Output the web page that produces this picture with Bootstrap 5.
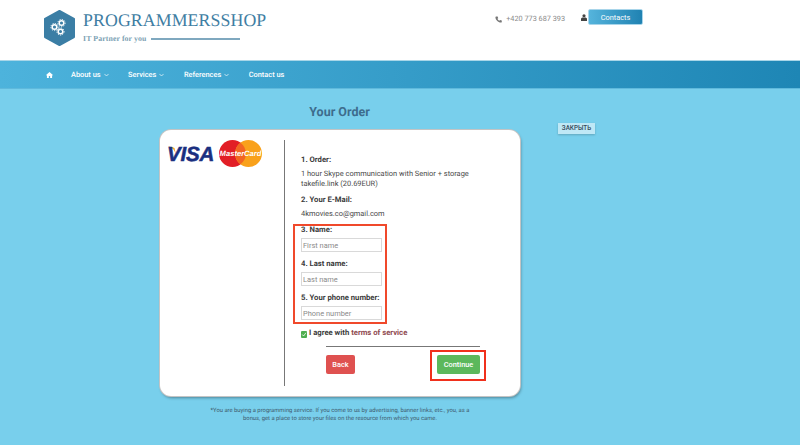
<!DOCTYPE html>
<html lang="en">
<head>
<meta charset="utf-8">
<title>Your Order</title>
<link href="https://cdn.jsdelivr.net/npm/bootstrap@5.3.0/dist/css/bootstrap.min.css" rel="stylesheet">
<style>
html,body{height:445px;overflow:hidden}
body{background:#78cfec;font-family:Roboto,"Liberation Sans",sans-serif;font-size:7.45px;color:#444;text-rendering:geometricPrecision}
.top-head{height:60px;background:#fff;padding:0 157px 0 42px}
.logo-name{font-family:"Liberation Serif",serif;font-size:17.8px;line-height:20px;color:#3f7ea3;letter-spacing:.1px}
.logo-text{margin-left:6px;padding-top:10px}
.logo-tag{font-family:"Liberation Serif",serif;font-size:7.8px;font-weight:700;color:#7c9fb3;line-height:9px;margin-top:4px;letter-spacing:.1px}
.logo-line{height:2px;width:89px;background:#7fa8bf;margin-left:4px}
.phone-box{color:#8a8a8a;font-size:7.3px;margin-top:14px;margin-right:16px}
.contact-btn{width:55px;height:16px;padding:0;border:1px solid #a8d5ea;border-radius:2px;background:linear-gradient(90deg,#55b4dc,#2082b2);color:#fff;font-size:7.4px;line-height:13px;margin-top:9px;margin-left:1px}
.top-nav{height:29px;background:linear-gradient(90deg,#4db3dc,#1e86b5);border-top:1px solid #a9d6e8;border-bottom:1px solid #5fb9dc;padding:1px 0 0 46px}
.nav-entry{color:#fff;font-size:7.4px;font-weight:500;text-decoration:none;margin-right:19.500px;display:flex;align-items:center;gap:3px}
.nav-entry svg{display:block}
.page-main{position:relative;padding-top:17px}
.order-title{font-size:12.500px;font-weight:700;color:#3d6c8c;text-align:center;width:679px;margin:0;line-height:14px}
.close-tag{position:absolute;left:558px;top:34px;width:37px;height:11px;background:#bfe8f6;color:#33495a;font-size:6.300px;font-weight:500;line-height:11px;text-align:center;box-shadow:0 1px 2px rgba(0,0,0,.2);padding:0;border:0;border-radius:0}
.order-card{width:360px;height:266px;margin:10px 0 0 160px;background:#fff;border-radius:11px;box-shadow:0 0 0 1px #c4c4c4,1px 2px 3px rgba(0,0,0,.35);padding:10px 0 10px 6px}
.pay-col{width:119px;border-right:1px solid #777;margin-right:16px;gap:5px;height:246px}
.form-col{padding-top:15px;width:190px}
.step-label{font-weight:700;font-size:7.700px;color:#3b3b3b;line-height:10px;margin:0 0 4px;white-space:nowrap}
.step-value{line-height:10px;margin:0 0 6px;color:#4a4a4a;white-space:nowrap}
.marked-box{border:2px solid #f0492b;margin-left:-8px;width:94px;padding:0 0 1px 6px;height:100px;margin-top:-1px;margin-bottom:4px}
.marked-box .step-label{margin:-1px 0 3px}
.field-input{display:block;width:81px;height:14px;border:1px solid #d9d9d9;border-radius:0;font-size:7.450px;padding:0 1px;color:#444;margin-bottom:8px;background:#fff;font-family:inherit}
.field-input::placeholder{color:#8a8a8a}
.agree-row{font-weight:700;color:#3b3b3b;line-height:10px;gap:2px;font-size:7.700px}
.agree-row a{color:#8f4a50;text-decoration:none}
.tick-box{width:6px;height:7px;background:#4fae4f;border:0;border-radius:1px;margin-top:3px;display:block}
.rule-line{height:1px;background:#777;width:154px;margin:8px 0 0 25px}
.action-row{margin:8px 0 0 25px;width:154px}
.back-btn,.go-btn{height:19px;padding:0;font-size:7.400px;font-weight:500;line-height:19px;border:0;border-radius:2px;color:#fff}
.back-btn{width:29px;background:#df5150}
.go-btn{width:43px;background:#5cb85c}
.go-mark{border:2px solid #f0301c;padding:3px 4px 5px 5px;margin:-5px -6px 0 0}
.fine-print{width:264px;margin:11px 0 0 208px;text-align:center;font-size:5.850px;line-height:8px;color:#3e5a6c}
</style>
</head>
<body>
<header class="top-head d-flex justify-content-between">
  <div class="d-flex">
    <svg width="35" height="38" viewBox="0 0 35 38" style="margin-top:9px">
      <polygon points="17.5,2 32,10 32,28 17.5,36 3,28 3,10" fill="#3b7ea5" stroke="#3b7ea5" stroke-linejoin="round" stroke-width="2"/>
      <g fill="none" stroke="#fff">
        <circle cx="12.5" cy="18" r="2.3" stroke-width="1.5"/><circle cx="12.5" cy="18" r="3.6" stroke-width="1" stroke-dasharray="1.2 1.2"/>
        <circle cx="19.5" cy="14" r="2.3" stroke-width="1.5"/><circle cx="19.5" cy="14" r="3.6" stroke-width="1" stroke-dasharray="1.2 1.2"/>
        <circle cx="18.5" cy="22.5" r="2.3" stroke-width="1.5"/><circle cx="18.5" cy="22.5" r="3.6" stroke-width="1" stroke-dasharray="1.2 1.2"/>
      </g>
    </svg>
    <div class="logo-text">
      <div class="logo-name">PROGRAMMERSSHOP</div>
      <div class="d-flex align-items-center logo-tag"><span>IT Partner for you</span><span class="logo-line"></span></div>
    </div>
  </div>
  <div class="d-flex align-items-start">
    <div class="phone-box d-flex align-items-center gap-1">
      <svg width="7" height="7" viewBox="0 0 16 16"><path fill="#777" d="M3 1l3 0 1.500 4-2 1.500c1 2 2.500 3.500 4.500 4.500l1.500-2 4 1.500 0 3c0 1-1 1.500-2 1.500C7 15 1 9 1 3 1 2 2 1 3 1z"/></svg>
      <span>+420 773 687 393</span>
    </div>
    <svg width="6" height="7" viewBox="0 0 12 14" style="margin-top:14px"><circle cx="6" cy="3.500" r="3.200" fill="#444"/><path fill="#444" d="M0 14V10c0-2 2-3 3.500-3h5C10 7 12 8 12 10v4z"/></svg>
    <button type="button" class="btn contact-btn">Contacts</button>
  </div>
</header>
<nav class="top-nav d-flex align-items-center">
  <a class="nav-entry" href="#" style="margin-right:18px"><svg width="7" height="6" viewBox="0 0 16 14"><path fill="#fff" d="M8 0l8 7-1 1.200-1-.9V14H9.500V9.500h-3V14H2V7.300l-1 .9L0 7z"/></svg></a>
  <a class="nav-entry" href="#">About us <svg width="5" height="4" viewBox="0 0 6 4"><path d="M.5.700 3 3.200 5.500.7" fill="none" stroke="#fff" stroke-width=".8"/></svg></a>
  <a class="nav-entry" href="#">Services <svg width="5" height="4" viewBox="0 0 6 4"><path d="M.5.700 3 3.200 5.500.7" fill="none" stroke="#fff" stroke-width=".8"/></svg></a>
  <a class="nav-entry" href="#">References <svg width="5" height="4" viewBox="0 0 6 4"><path d="M.5.700 3 3.200 5.500.7" fill="none" stroke="#fff" stroke-width=".8"/></svg></a>
  <a class="nav-entry" href="#">Contact us</a>
</nav>
<main class="page-main">
  <button type="button" class="btn close-tag">ЗАКРЫТЬ</button>
  <h1 class="order-title">Your Order</h1>
  <section class="order-card d-flex">
    <div class="pay-col d-flex align-items-start">
      <svg width="48" height="24" viewBox="0 0 48 24" style="margin-top:2px">
        <path d="M0 4.500c5 0 8 2 10 8L8.500 6C6 4.800 3 4.300 0 4.500z" fill="#f2a32a"/>
        <text x="1" y="19" font-family="Liberation Sans,sans-serif" font-weight="700" font-style="italic" font-size="20.500" fill="#1a2f80" stroke="#1a2f80" stroke-width=".5" letter-spacing="-.2">VISA</text>
      </svg>
      <svg width="43" height="27" viewBox="0 0 43 27">
        <circle cx="13.500" cy="13.500" r="13.500" fill="#e21e26"/>
        <circle cx="29.500" cy="13.500" r="13.500" fill="#f9a11b"/>
        <path d="M21.500 2.700a13.500 13.500 0 0 0 0 21.600a13.500 13.500 0 0 0 0-21.600z" fill="#f26522"/>
        <text x="21.500" y="16" text-anchor="middle" font-family="Liberation Sans,sans-serif" font-weight="700" font-style="italic" font-size="7.600" fill="#fff">MasterCard</text>
      </svg>
    </div>
    <div class="form-col">
      <p class="step-label">1. Order:</p>
      <p class="step-value">1 hour Skype communication with Senior + storage<br>takefile.link (20.69EUR)</p>
      <p class="step-label">2. Your E-Mail:</p>
      <p class="step-value">4kmovies.co@gmail.com</p>
      <div class="marked-box">
        <p class="step-label">3. Name:</p>
        <input class="field-input" type="text" placeholder="First name">
        <p class="step-label">4. Last name:</p>
        <input class="field-input" type="text" placeholder="Last name">
        <p class="step-label">5. Your phone number:</p>
        <input class="field-input" type="text" placeholder="Phone number">
      </div>
      <div class="agree-row d-flex align-items-start">
        <svg class="tick-box" viewBox="0 0 6 7"><path d="M1.200 3.500 2.600 5 4.900 1.800" fill="none" stroke="#fff" stroke-width=".8"/></svg>
        <span>I agree with <a href="#">terms of service</a></span>
      </div>
      <div class="rule-line"></div>
      <div class="action-row d-flex justify-content-between align-items-start">
        <button type="button" class="btn back-btn">Back</button>
        <div class="go-mark"><button type="button" class="btn go-btn d-block">Continue</button></div>
      </div>
    </div>
  </section>
  <p class="fine-print">*You are buying a programming service. If you come to us by advertising, banner links, etc., you, as a bonus, get a place to store your files on the resource from which you came.</p>
</main>
<script src="https://cdn.jsdelivr.net/npm/bootstrap@5.3.0/dist/js/bootstrap.bundle.min.js"></script>
</body>
</html>
